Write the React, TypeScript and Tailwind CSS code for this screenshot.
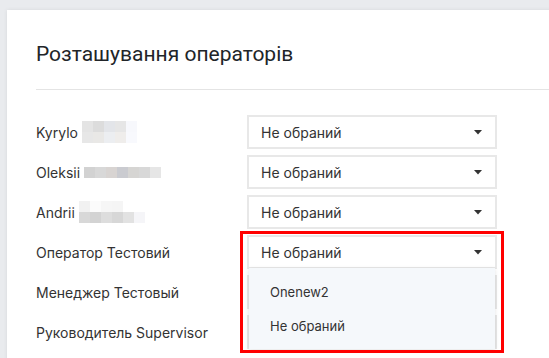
import React from "react"

const blurs: Record<string, string[][]> = {
  kyrylo: [
    ["bg-[#e4e4e4]", "bg-[#dcdcdc]", "bg-[#e3e5e9]", "bg-[#e6e6e6]", "bg-[#f7f8fc]"],
    ["bg-[#e7e7e7]", "bg-[#e9e8e6]", "bg-[#eceef1]", "bg-[#efedeb]", "bg-[#f8f9fd]"],
  ],
  oleksii: [
    ["bg-[#d2d2d2]", "bg-[#d8d8d8]", "bg-[#d8d4d2]", "bg-[#cacbd0]", "bg-[#d6d5d3]", "bg-[#d8d8d8]", "bg-[#e6e6e6]"],
  ],
  andrii: [
    ["bg-[#f1f1f1]", "bg-[#fbfbfb]", "bg-[#f6f6f6]", "bg-[#f5f5f5]", "bg-[#ffffff]", "bg-[#ffffff]"],
    ["bg-[#d8d8d8]", "bg-[#d3d3d3]", "bg-[#dddddd]", "bg-[#d7d7d7]", "bg-[#e2e2e2]", "bg-[#f5f5f8]"],
  ],
}

function Blur({ name }: { name: string }) {
  return (
    <span className="inline-flex flex-col ml-[4px] blur-[0.4px]">
      {blurs[name].map((row, i) => (
        <span key={i} className="flex">
          {row.map((c, j) => (
            <span key={j} className={`${c} w-[11px] h-[11px]`} />
          ))}
        </span>
      ))}
    </span>
  )
}

function Caret() {
  return (
    <svg width="8" height="5" viewBox="0 0 8 5" className="shrink-0">
      <path d="M0 0 L8 0 L4 4.5 Z" fill="#333" />
    </svg>
  )
}

function Select({ hidden }: { hidden?: boolean }) {
  return (
    <div className="w-[250px] h-[34px] border-2 border-[#e8e8e8] bg-white flex items-center justify-between pl-[12px] pr-[13px] text-[14px] text-[#333]">
      {/* covered by the open dropdown */}
      <span className={hidden ? "invisible" : ""}>Не обраний</span>
      <Caret />
    </div>
  )
}

export default function App() {
  const font = { fontFamily: "Inter, 'Noto Sans', sans-serif" }
  return (
    <div className="w-[549px] h-[358px] overflow-hidden bg-[#e9ebee] pt-[10px] pl-[7px]" style={font}>
      <div className="bg-white w-[620px] h-[420px] pl-[29px] shadow-[0_0_4px_rgba(0,0,0,0.08)]">
        <h2
          className="pt-[32px] text-[21px] leading-[24px] text-[#212529]"
          style={{ fontFamily: "Roboto, 'Noto Sans', sans-serif" }}
        >
          Розташування операторів
        </h2>
        <div className="mt-[23px] border-t border-[#e4e4e4]" />

        <div className="mt-[25px] flex flex-col gap-[6px]">
          <div className="flex items-center h-[34px]">
            <div className="w-[211px] flex items-center text-[14px] text-[#333]">
              Kyrylo <Blur name="kyrylo" />
            </div>
            <Select />
          </div>
          <div className="flex items-center h-[34px]">
            <div className="w-[211px] flex items-center text-[14px] text-[#333]">
              Oleksii <Blur name="oleksii" />
            </div>
            <Select />
          </div>
          <div className="flex items-center h-[34px]">
            <div className="w-[211px] flex items-center text-[14px] text-[#333]">
              Andrii <Blur name="andrii" />
            </div>
            <Select />
          </div>
          <div className="flex items-center h-[34px] relative z-10">
            <div className="w-[211px] text-[14px] text-[#333]">Оператор Тестовий</div>
            <div className="relative">
              <Select />
              <div className="absolute left-[2px] top-[33px] w-[246px] bg-[#f5f8fb] shadow-[0_1px_4px_rgba(0,0,0,0.12)] pt-[8px] pb-[5px] text-[13px] text-[#333]">
                <div className="h-[34px] flex items-center pl-[21px]">Onenew2</div>
                <div className="h-[34px] flex items-center pl-[21px]">Не обраний</div>
              </div>
              <div className="absolute left-[-7px] top-[-4px] w-[264px] h-[122px] border-[3px] border-[#ff0000]" />
            </div>
          </div>
          <div className="flex items-center h-[34px]">
            <div className="w-[211px] text-[14px] text-[#333]">Менеджер Тестовый</div>
            <Select hidden />
          </div>
          <div className="flex items-center h-[34px]">
            <div className="w-[211px] text-[14px] text-[#333]">Руководитель Supervisor</div>
            <Select hidden />
          </div>
        </div>
      </div>
    </div>
  )
}
